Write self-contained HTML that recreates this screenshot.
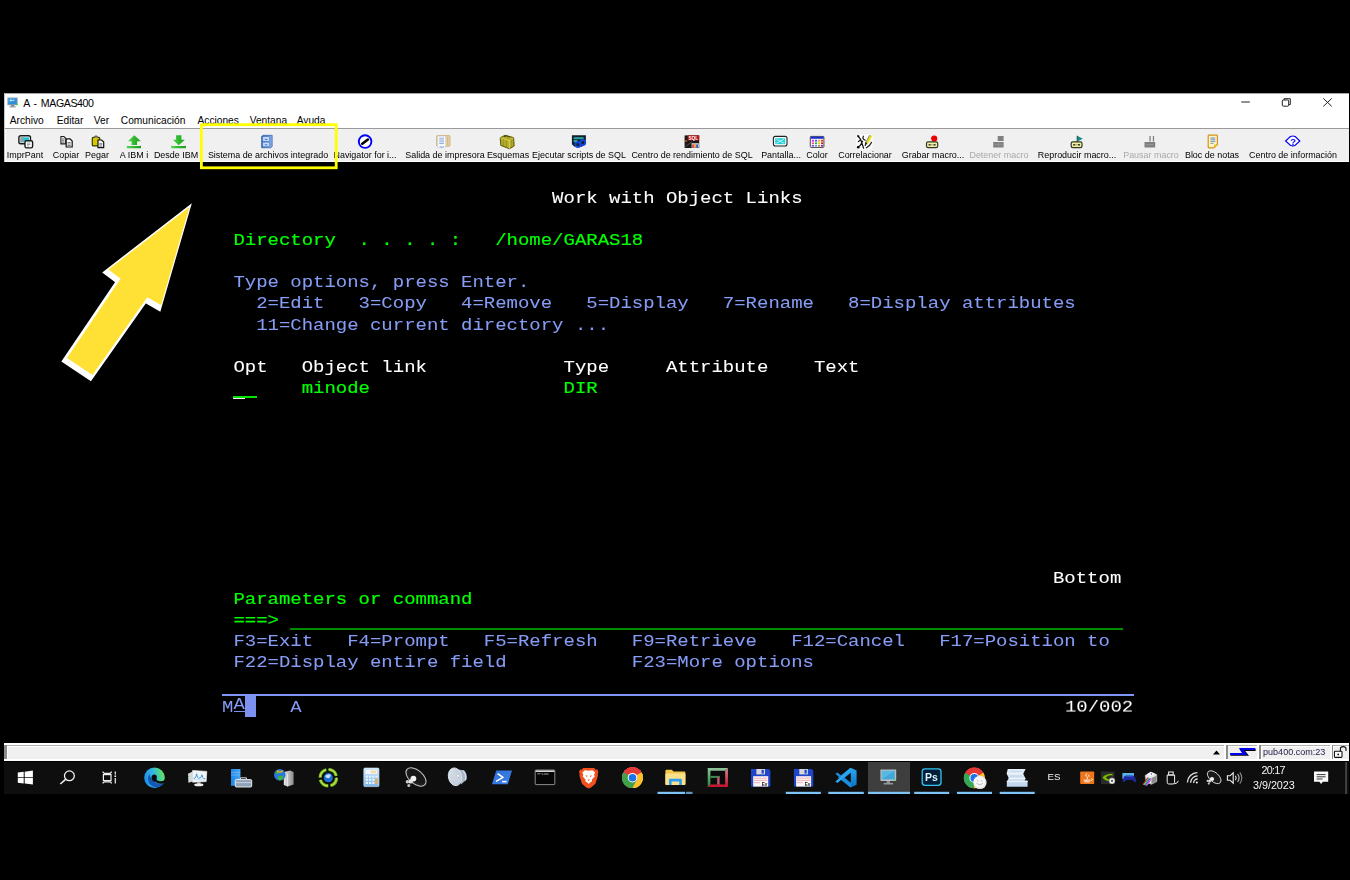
<!DOCTYPE html>
<html lang="es">
<head>
<meta charset="utf-8">
<title>A - MAGAS400</title>
<style>
html,body{margin:0;padding:0;background:#000;}
body{width:1350px;height:880px;position:relative;overflow:hidden;font-family:"Liberation Sans",sans-serif;}
.abs{position:absolute;}
/* window chrome */
#titlebar{position:absolute;left:4px;top:93px;width:1345px;height:69px;background:#fff;}
#tbline{position:absolute;left:4px;top:128px;width:1345px;height:1px;background:#9a9a9a;}
#toolbar{position:absolute;left:6px;top:129px;width:1343px;height:32px;background:#f0f0f0;}
.ui{position:absolute;white-space:nowrap;color:#000;line-height:12px;}
.title{font-size:10.6px;top:96.6px;letter-spacing:-0.4px;word-spacing:1.6px;}
.menu{font-size:10.2px;top:114.7px;}
.tl{font-size:8.95px;top:148.7px;transform:translateX(-50%);color:#000;will-change:transform;}
.tl.dis{color:#a9a9a9;}
.ico{position:absolute;}
/* terminal */
#term{will-change:transform;position:absolute;left:221.5px;top:188.45px;width:912px;height:504px;}
.row{position:absolute;left:0;height:21px;line-height:21px;white-space:pre;font-family:"Liberation Mono",monospace;font-size:18.98px;transform:scaleY(0.9);transform-origin:0 50%;}
.g{color:#00ff00;-webkit-text-stroke:0.25px #00ff00;}
.b{color:#869cf5;-webkit-text-stroke:0.08px #869cf5;}
.w{color:#ffffff;-webkit-text-stroke:0.08px #ffffff;}
.st{-webkit-text-stroke:0 !important;}
</style>
</head>
<body>
<!-- TITLEBAR -->
<div id="titlebar"></div>
<div id="tbline"></div>
<div id="toolbar"></div>
<div class="abs" style="left:4px;top:93px;width:1345px;height:1px;background:#a6a6a6"></div>
<div class="abs" style="left:4px;top:93px;width:1px;height:69px;background:#c4c4c4"></div>
<div class="ui title" style="left:23.3px">A - MAGAS400</div>
<div class="ui menu" style="left:9.7px">Archivo</div>
<div class="ui menu" style="left:56.7px">Editar</div>
<div class="ui menu" style="left:93.8px">Ver</div>
<div class="ui menu" style="left:120.8px">Comunicación</div>
<div class="ui menu" style="left:197.5px">Acciones</div>
<div class="ui menu" style="left:249.7px">Ventana</div>
<div class="ui menu" style="left:296.7px">Ayuda</div>
<div class="ui tl" style="left:25.4px">ImprPant</div>
<div class="ui tl" style="left:65.5px">Copiar</div>
<div class="ui tl" style="left:97.2px">Pegar</div>
<div class="ui tl" style="left:133.8px">A IBM i</div>
<div class="ui tl" style="left:176.2px">Desde IBM</div>
<div class="ui tl" style="left:268.2px">Sistema de archivos integrado</div>
<div class="ui tl" style="left:365.2px">Navigator for i...</div>
<div class="ui tl" style="left:444.9px">Salida de impresora</div>
<div class="ui tl" style="left:507.8px">Esquemas</div>
<div class="ui tl" style="left:579.4px">Ejecutar scripts de SQL</div>
<div class="ui tl" style="left:692.4px">Centro de rendimiento de SQL</div>
<div class="ui tl" style="left:781.2px">Pantalla...</div>
<div class="ui tl" style="left:816.5px">Color</div>
<div class="ui tl" style="left:864.6px">Correlacionar</div>
<div class="ui tl" style="left:932.5px">Grabar macro...</div>
<div class="ui tl dis" style="left:999.0px">Detener macro</div>
<div class="ui tl" style="left:1076.7px">Reproducir macro...</div>
<div class="ui tl dis" style="left:1150.5px">Pausar macro</div>
<div class="ui tl" style="left:1212.0px">Bloc de notas</div>
<div class="ui tl" style="left:1293.2px">Centro de información</div>

<svg class="abs" style="left:0;top:0" width="1350" height="880" viewBox="0 0 1350 880">
<defs>
<linearGradient id="gGreen" x1="0" y1="0" x2="1" y2="0"><stop offset="0" stop-color="#55d455"/><stop offset="0.5" stop-color="#2eb82e"/><stop offset="1" stop-color="#1e9a1e"/></linearGradient>
<linearGradient id="gCab" x1="0" y1="0" x2="1" y2="0"><stop offset="0" stop-color="#2d62b8"/><stop offset="1" stop-color="#8ab0ea"/></linearGradient>
</defs>
<!-- app icon in title -->
<g>
<rect x="7.300" y="97.400" width="10.400" height="7.800" rx="0.600" fill="#9aa4ac"/>
<rect x="8.200" y="98.200" width="8.600" height="6.100" fill="#2f8fd8"/>
<path d="M8.200 98.200 h8.600 l-8.600 4.600z" fill="#5ab0ea" opacity="0.600"/>
<path d="M10 100.400 h4.600 M10 100.400 l1.300 -1.100 M10 100.400 l1.300 1.100" stroke="#d8eefc" stroke-width="0.800" fill="none"/>
<circle cx="16.700" cy="104.300" r="0.900" fill="#2fd03a"/>
<path d="M11.200 105.200 h2.800 l0.600 1.300 h-4z" fill="#5a6068"/>
<rect x="9.300" y="106.500" width="6.600" height="0.900" fill="#8a9098"/>
</g>
<!-- window controls -->
<g stroke="#222" stroke-width="1" fill="none">
<line x1="1241.3" y1="102" x2="1249.8" y2="102"/>
<rect x="1282.3" y="100" width="6.4" height="6.2" rx="1"/>
<path d="M1284 100 V98.7 H1290.3 V104.6 H1288.8"/>
<path d="M1323.3 98.4 L1331.8 106.4 M1331.8 98.4 L1323.3 106.4"/>
</g>
<!-- ImprPant -->
<g>
<rect x="18.9" y="135.8" width="11.6" height="8" rx="1.8" fill="#fff" stroke="#1a1a1a" stroke-width="1.4"/>
<rect x="20.4" y="137.3" width="8.6" height="5" fill="#18c8d8"/>
<rect x="20.4" y="137.3" width="3" height="5" fill="#a89c9c"/>
<rect x="25" y="140.7" width="7.6" height="7.2" rx="1.6" fill="#fff" stroke="#1a1a1a" stroke-width="1.4"/>
<path d="M27 143 h3.4 M27 144.6 h3.4 M27 146 h2" stroke="#777" stroke-width="0.7"/>
</g>
<!-- Copiar -->
<g>
<path d="M60.9 136.5 h3 l1.8 1.8 v5.6 h-4.8z" fill="#e8e8e8" stroke="#222" stroke-width="1.1"/>
<path d="M62 139 h2.4 M62 140.6 h2.4 M62 142.2 h2.4" stroke="#555" stroke-width="0.7"/>
<path d="M66.2 138.8 h3.8 l2.2 2.2 v6 h-6z" fill="#fff" stroke="#111" stroke-width="1.2"/>
<path d="M67.5 142.5 h3.2 M67.5 144 h3.2 M67.5 145.5 h3.2" stroke="#444" stroke-width="0.7"/>
</g>
<!-- Pegar -->
<g>
<rect x="92.3" y="137.3" width="7.4" height="8.6" rx="1" fill="#d8c800" stroke="#3a3a00" stroke-width="1.2"/>
<path d="M94 137.5 q2 -3.2 4 0" fill="#ddd" stroke="#333" stroke-width="1"/>
<path d="M98 140 h3.6 l2.1 2.1 v5.5 h-5.7z" fill="#fff" stroke="#111" stroke-width="1.2"/>
<path d="M99.3 143.4 h3 M99.3 144.8 h3 M99.3 146.2 h3" stroke="#555" stroke-width="0.7"/>
</g>
<!-- A IBM i (upload) -->
<g fill="url(#gGreen)">
<path d="M134.3 135.2 L140.8 141.2 H137.1 V145.1 H131.6 V141.2 H127.9z"/>
<path d="M126.8 145 q0 1 1 1 h12.2 q1 0 1 -1 v3.3 h-14.2z"/>
</g>
<!-- Desde IBM (download) -->
<g fill="url(#gGreen)">
<path d="M176 135.3 H181.4 V139.8 H184.8 L178.7 145.2 L172.8 139.8 H176z"/>
<path d="M171.2 145 q0 1 1 1 h12.7 q1 0 1 -1 v3.3 h-14.7z"/>
</g>
<!-- Sistema de archivos integrado (file cabinet) -->
<g>
<path d="M261.6 136.3 l1.6 -1 h9 v11.3 l-1.6 1.2 h-9z" fill="url(#gCab)" stroke="#1f4f9f" stroke-width="0.6"/>
<rect x="262.8" y="136.8" width="6.6" height="4.4" fill="#c9dcf7" stroke="#4a78c8" stroke-width="0.5"/>
<rect x="262.8" y="142.2" width="6.6" height="4.4" fill="#c9dcf7" stroke="#4a78c8" stroke-width="0.5"/>
<path d="M264.8 139.4 h2.6 M264.8 144.8 h2.6" stroke="#3565b5" stroke-width="0.9"/>
</g>
<!-- Navigator for i -->
<g>
<circle cx="365.1" cy="141.6" r="6.3" fill="#fff" stroke="#0000ff" stroke-width="1.9"/>
<path d="M362.3 143.7 L367.9 139.5" stroke="#000" stroke-width="2.6" stroke-linecap="round"/>
</g>
<!-- Salida de impresora -->
<g>
<rect x="436.6" y="135.6" width="13.4" height="10.6" rx="0.8" fill="#e9d9b5" stroke="#c9a868" stroke-width="0.8"/>
<path d="M437.8 136.2 h7.6 v10.6 l-2 0.8 h-5.6z" fill="#fff" stroke="#b9c9e0" stroke-width="0.5"/>
<path d="M439.2 138.2 h4.8 M439.2 140 h4.8 M439.2 141.8 h4.8 M439.2 143.6 h4.8" stroke="#7d9fd8" stroke-width="0.9"/>
<path d="M439.6 146.4 l2.6 1 l1.6 -1" stroke="#5a8ad8" stroke-width="0.8" fill="none"/>
<rect x="446.6" y="136.4" width="2" height="9" fill="#d9be88"/>
</g>
<!-- Esquemas -->
<g>
<path d="M500.2 137.8 L505 135.2 L513.6 137.6 L514.2 146 L509.4 148.8 L500.8 145.4z" fill="#b4ac2c" stroke="#4e4a00" stroke-width="0.9"/>
<path d="M500.2 137.8 L509.2 140.6 L513.6 137.6 M509.2 140.6 L509.4 148.8" stroke="#e0dc58" stroke-width="0.8" fill="none"/>
<path d="M503.2 138.9 L503.6 146.3 M506.2 139.8 L506.5 147.5 M511.6 139.2 L511.9 147.2" stroke="#8a8410" stroke-width="0.6"/>
<path d="M504 136.6 q3 -1.6 5.4 0.6" stroke="#444000" stroke-width="0.9" fill="none"/>
</g>
<!-- Ejecutar scripts de SQL -->
<g>
<path d="M571.9 135.3 h14 v8.5 l-4 3 h-7.4 l-2.6 -2.6z" fill="#10202c"/>
<rect x="573.6" y="137.2" width="10" height="2" fill="#2aa0a0"/>
<rect x="573.6" y="140" width="4" height="2.4" fill="#2aa0a0"/>
<circle cx="578" cy="144.6" r="2.5" fill="none" stroke="#1048e8" stroke-width="1.7"/>
<circle cx="582.8" cy="142.6" r="2.5" fill="none" stroke="#1048e8" stroke-width="1.7"/>
</g>
<!-- Centro de rendimiento de SQL -->
<g>
<rect x="684.6" y="135.4" width="14.6" height="12.6" fill="#181818"/>
<rect x="687.6" y="135.4" width="11.6" height="5" fill="#b81818"/>
<text x="688.4" y="139.7" font-family="Liberation Sans, sans-serif" font-weight="bold" font-size="5.2" fill="#fff" textLength="9.8" lengthAdjust="spacingAndGlyphs">SQL</text>
<path d="M685.4 146.6 L692 141.8" stroke="#666" stroke-width="0.8"/>
<rect x="691.6" y="143.2" width="7.2" height="4.4" fill="#ddd"/>
<rect x="692.2" y="144.4" width="1.6" height="3.2" fill="#e03030"/>
<rect x="694.2" y="143.8" width="1.6" height="3.8" fill="#e8a020"/>
<rect x="696.2" y="144.4" width="1.8" height="3.2" fill="#3050e0"/>
<rect x="685" y="140.4" width="2.2" height="1.2" fill="#e87010"/>
</g>
<!-- Pantalla -->
<g>
<rect x="773.4" y="136.4" width="13.6" height="9.6" rx="2" fill="#fff" stroke="#222" stroke-width="1.1"/>
<rect x="775.2" y="138.2" width="10" height="6" fill="#28d0d8"/>
<path d="M776.4 139.2 L784 143.2 M784 139.2 L776.4 143.2" stroke="#c8f6f8" stroke-width="0.9"/>
</g>
<!-- Color -->
<g>
<rect x="810.3" y="136.4" width="13.6" height="11" rx="0.8" fill="#fff" stroke="#333" stroke-width="0.9"/>
<rect x="810.6" y="136.6" width="13" height="2.2" fill="#2030d0"/>
<g>
<rect x="811.8" y="139.8" width="2.2" height="1.8" fill="#e020e0"/><rect x="814.9" y="139.8" width="2.2" height="1.8" fill="#3060f0"/><rect x="818" y="139.8" width="2.2" height="1.8" fill="#f0a020"/><rect x="821" y="139.8" width="2" height="1.8" fill="#e03030"/>
<rect x="811.8" y="142.4" width="2.2" height="1.8" fill="#f050a0"/><rect x="814.9" y="142.4" width="2.2" height="1.8" fill="#20b040"/><rect x="818" y="142.4" width="2.2" height="1.8" fill="#e0d020"/><rect x="821" y="142.4" width="2" height="1.8" fill="#d02020"/>
<rect x="811.8" y="145" width="2.2" height="1.6" fill="#a040e0"/><rect x="814.9" y="145" width="2.2" height="1.6" fill="#40a0f0"/><rect x="818" y="145" width="2.2" height="1.6" fill="#f07030"/><rect x="821" y="145" width="2" height="1.6" fill="#7030c0"/>
</g>
</g>
<!-- Correlacionar -->
<g>
<rect x="856.200" y="134.200" width="16.400" height="15.400" rx="3" fill="#fff" opacity="0.700"/>
<path d="M857.800 135.800 L860.600 139.400 L863.600 148.200 M857.600 147.200 L860.200 145.600 L862.600 141.200 M858.400 141.600 L860.600 139.800 M863.400 136.200 Q861.800 138.800 865.200 140.200" stroke="#111" stroke-width="1.200" fill="none" stroke-linecap="round"/>
<circle cx="858.200" cy="147.200" r="1.300" fill="#000"/><circle cx="858.400" cy="136.200" r="1" fill="#000"/>
<path d="M871.100 135.400 L866.800 143.400" stroke="#e8e000" stroke-width="2.400"/>
<path d="M869.600 135.200 L865.600 142.800" stroke="#55559a" stroke-width="0.700"/>
<path d="M866.800 143.200 L865.200 145.800 L865.600 142.600z" fill="#111" stroke="#111" stroke-width="0.800"/>
<path d="M866.400 147.800 Q869.800 146 871.400 142.400" stroke="#222" stroke-width="1.300" fill="none" stroke-linecap="round"/>
</g>
<!-- Grabar macro -->
<g>
<circle cx="934.2" cy="138.6" r="3.1" fill="#f00000"/>
<rect x="926.5" y="141.9" width="11.2" height="5.7" rx="1.6" fill="#f0f0a0" stroke="#303828" stroke-width="1.2"/>
<rect x="928.6" y="144" width="2" height="1.6" fill="#404030"/><rect x="933.6" y="144" width="2" height="1.6" fill="#404030"/>
<path d="M930.6 144.8 h3" stroke="#808060" stroke-width="0.7"/>
</g>
<!-- Detener macro (disabled) -->
<g fill="#808080">
<rect x="997.7" y="136" width="5.9" height="5"/>
<rect x="993.2" y="142" width="10.4" height="5.5"/>
<path d="M993.2 144.4 h10.4 M998.4 142 v5.5" stroke="#9a9a9a" stroke-width="0.6"/>
</g>
<!-- Reproducir macro -->
<g>
<path d="M1077.2 135.8 L1082.8 138.8 L1077.2 141.6z" fill="#188888"/>
<path d="M1077.2 135.8 V142" stroke="#104848" stroke-width="0.9"/>
<rect x="1071.2" y="141.9" width="10.8" height="5.7" rx="1.6" fill="#f0f0a0" stroke="#303828" stroke-width="1.2"/>
<rect x="1073.2" y="144" width="2" height="1.6" fill="#404030"/><rect x="1078" y="144" width="2" height="1.6" fill="#404030"/>
<path d="M1075.2 144.8 h2.8" stroke="#808060" stroke-width="0.7"/>
</g>
<!-- Pausar macro (disabled) -->
<g fill="#808080">
<rect x="1149.4" y="136" width="1.3" height="5.4"/><rect x="1152.8" y="136" width="1.3" height="5.4"/>
<rect x="1144.5" y="142" width="10.7" height="5.5"/>
<path d="M1146.4 144.6 h6.8" stroke="#a0a0a0" stroke-width="0.8"/>
</g>
<!-- Bloc de notas -->
<g>
<path d="M1208.2 136 q0 -0.8 0.8 -0.8 h7.6 q0.8 0 0.8 0.8 v8.4 l-3.4 3.4 h-5 q-0.8 0 -0.8 -0.8z" fill="#fdf6c0" stroke="#d89018" stroke-width="1.2"/>
<path d="M1217.4 144.4 l-3.4 3.4 v-3.4z" fill="#f0c020"/>
<path d="M1210.4 138 h5 M1210.4 139.8 h5 M1210.4 141.6 h5 M1210.4 143.4 h3" stroke="#6080c8" stroke-width="0.8"/>
<rect x="1211.6" y="137.4" width="2.8" height="3" fill="#88a8e8" opacity="0.6"/>
</g>
<!-- Centro de informacion -->
<g>
<path d="M1285.6 141 L1290.4 136.6 Q1292.8 135.4 1295.2 136.6 L1299.8 141 L1295.2 145.2 Q1292.8 146.6 1290.4 145.2z" fill="#fff" stroke="#0808f0" stroke-width="1.2"/>
<text x="1290.3" y="144.6" font-family="Liberation Sans, sans-serif" font-weight="bold" font-size="9.5" fill="#0808f0">?</text>
</g>
</svg>

<!-- TERMINAL -->
<div id="term">
<div class="row w" style="top:0.00px">                             Work with Object Links</div>
<div class="row g" style="top:42.17px"> Directory  . . . . :   /home/GARAS18</div>
<div class="row b" style="top:84.34px"> Type options, press Enter.</div>
<div class="row b" style="top:105.43px">   2=Edit   3=Copy   4=Remove   5=Display   7=Rename   8=Display attributes</div>
<div class="row b" style="top:126.51px">   11=Change current directory ...</div>
<div class="row w" style="top:168.68px"> Opt   Object link            Type     Attribute    Text</div>
<div class="row g" style="top:189.77px">       minode                 DIR</div>
<div class="row w" style="top:379.53px">                                                                         Bottom</div>
<div class="row g" style="top:400.62px"> Parameters or command</div>
<div class="row g" style="top:421.70px"> ===></div>
<div class="row b" style="top:442.79px"> F3=Exit   F4=Prompt   F5=Refresh   F9=Retrieve   F12=Cancel   F17=Position to</div>
<div class="row b" style="top:463.87px"> F22=Display entire field           F23=More options</div>
<div class="abs" style="left:11.4px;top:207.6px;width:24px;height:2px;background:#00e600"></div>
<div class="abs" style="left:11.4px;top:209.6px;width:11.3px;height:1px;background:#f4e4f4"></div>
<div class="abs" style="left:68.0px;top:439.6px;width:832.5px;height:2px;background:#008c00"></div>
<div class="abs" style="left:0.0px;top:505.6px;width:911.7px;height:2px;background:#8096f5"></div>
<div class="row b st" style="left:0.00px;top:509.2px">M</div>
<div class="row b st" style="left:11.40px;top:506.3px">A</div>
<div class="abs" style="left:11.5px;top:522.5px;width:11.2px;height:1px;background:#7d92f0"></div>
<div class="abs" style="left:22.7px;top:508.3px;width:11.6px;height:20.6px;background:#7d92f0"></div>
<div class="row b st" style="left:68.34px;top:509.2px">A</div>
<div class="row w st" style="left:842.90px;top:509.2px">10/002</div>
</div>
<!-- STATUSBAR -->
<div class="abs" style="left:4.4px;top:743px;width:1344.6px;height:18px;background:#fff"></div>
<div class="abs" style="left:4.4px;top:745px;width:1344.6px;height:1px;background:#b0b0b0"></div>
<div class="abs" style="left:4.4px;top:745px;width:2.4px;height:13.7px;background:#8c8c8c"></div>
<div class="abs" style="left:8px;top:747.2px;width:1215.9px;height:11.5px;background:#f0f0f0"></div>
<div class="abs" style="left:1223.9px;top:745px;width:2.2px;height:16px;background:#fff"></div>
<div class="abs" style="left:1226.1px;top:745px;width:1.5px;height:13.7px;background:#8c8c8c"></div>
<div class="abs" style="left:1228.3px;top:746.8px;width:28.5px;height:11.9px;background:#f0f0f0"></div>
<div class="abs" style="left:1256.8px;top:745px;width:2.6px;height:16px;background:#fff"></div>
<div class="abs" style="left:1259.4px;top:745px;width:1.5px;height:13.7px;background:#8c8c8c"></div>
<div class="abs" style="left:1261.5px;top:746.8px;width:68px;height:11.9px;background:#f0f0f0"></div>
<div class="abs" style="left:1329.5px;top:745px;width:2.2px;height:16px;background:#fff"></div>
<div class="abs" style="left:1331.7px;top:745px;width:1.5px;height:13.7px;background:#8c8c8c"></div>
<div class="abs" style="left:1333.8px;top:746.8px;width:15.2px;height:11.9px;background:#f0f0f0"></div>
<div class="ui" style="left:1263px;top:746.4px;font-size:9.05px;color:#1c1c48">pub400.com:23</div>
<!-- TASKBAR -->
<div class="abs" style="left:4.4px;top:762px;width:1344.6px;height:32px;background:#0e0e0e"></div>
<div class="abs" style="left:868px;top:762px;width:42px;height:32px;background:#3e3e3e"></div>
<div class="ui" style="left:1047.6px;top:770.9px;font-size:9.7px;color:#f4f4f4">ES</div>
<div class="ui" style="left:1261.6px;top:764.3px;font-size:10.8px;color:#f4f4f4;letter-spacing:-0.75px">20:17</div>
<div class="ui" style="left:1253px;top:779.4px;font-size:10.8px;color:#f4f4f4;letter-spacing:-0.03px">3/9/2023</div>

<svg class="abs" style="left:0;top:0" width="1350" height="880" viewBox="0 0 1350 880">
<defs>
<linearGradient id="gEdge" x1="0" y1="0.6" x2="1" y2="0.35"><stop offset="0" stop-color="#1a8ee6"/><stop offset="0.45" stop-color="#2fb4e8"/><stop offset="0.8" stop-color="#4fd68a"/><stop offset="1" stop-color="#6ee65a"/></linearGradient>
<linearGradient id="gGr" x1="0" y1="0" x2="0" y2="1"><stop offset="0" stop-color="#8fc49a"/><stop offset="1" stop-color="#1f8a3a"/></linearGradient>
<linearGradient id="gRd" x1="0" y1="0" x2="0" y2="1"><stop offset="0" stop-color="#e08a98"/><stop offset="1" stop-color="#c8102a"/></linearGradient>
<linearGradient id="gSrv" x1="0" y1="0" x2="1" y2="0"><stop offset="0" stop-color="#1c86e8"/><stop offset="1" stop-color="#49a6f5"/></linearGradient>
<linearGradient id="gTower" x1="0" y1="0" x2="1" y2="0"><stop offset="0" stop-color="#e8e8e8"/><stop offset="1" stop-color="#8a8a8a"/></linearGradient>
<linearGradient id="gCalc" x1="0" y1="0" x2="0" y2="1"><stop offset="0" stop-color="#cfe6fb"/><stop offset="1" stop-color="#7db6ea"/></linearGradient>
<linearGradient id="gPS" x1="0" y1="0" x2="1" y2="1"><stop offset="0" stop-color="#2f6fd6"/><stop offset="1" stop-color="#3b82e8"/></linearGradient>
<linearGradient id="gVS" x1="0" y1="0" x2="0" y2="1"><stop offset="0" stop-color="#2aa7f2"/><stop offset="1" stop-color="#0b72c4"/></linearGradient>
<linearGradient id="gStack" x1="0" y1="0" x2="0" y2="1"><stop offset="0" stop-color="#e4eff9"/><stop offset="1" stop-color="#bcd4ea"/></linearGradient>
<radialGradient id="gSpk" cx="0.35" cy="0.35" r="0.8"><stop offset="0" stop-color="#e8eef4"/><stop offset="1" stop-color="#b4c0ce"/></radialGradient>
</defs>
<!-- start -->
<g fill="#fff">
<path d="M17.8 772.6 L23.7 771.8 V777.2 H17.8z"/><path d="M24.7 771.7 L32.9 770.6 V777.2 H24.7z"/>
<path d="M17.8 778.1 H23.7 V783.5 L17.8 782.7z"/><path d="M24.7 778.1 H32.9 V784.6 L24.7 783.6z"/>
</g>
<!-- search -->
<g stroke="#f2f2f2" fill="none" stroke-width="1.3">
<circle cx="69.4" cy="775.8" r="4.9"/><path d="M65.6 779.4 L60.3 784" stroke-width="1.5"/>
</g>
<!-- task view -->
<g stroke="#f0f0f0" fill="none" stroke-width="1.2">
<rect x="103.4" y="774.6" width="7.6" height="6"/>
<path d="M102.6 771.6 L104.2 773.4 H110.2 L111.8 771.6 M102.6 783.4 L104.2 781.8 H110.2 L111.8 783.4"/>
<path d="M115.3 771.4 V774.4 M115.3 778 V783.4"/>
<circle cx="115.3" cy="776.2" r="0.9" fill="#f0f0f0" stroke="none"/>
</g>
<!-- edge -->
<g>
<circle cx="154.500" cy="777.700" r="10.300" fill="url(#gEdge)"/>
<path d="M149.400 774.200 C146.600 778 148.200 784.600 153.600 786.800 C157.600 788.400 162.200 786.400 164.400 782.600 C160.600 785 155.600 783.600 153.400 780.600 C151.400 778.800 150.200 776.400 149.400 774.200z" fill="#1458b4"/>
<path d="M151.600 777.700 C151.400 775.400 153.200 774.400 154.600 774.600 C156.400 774.800 157.400 776.400 156.600 778.400 C155.800 780 158.800 781.600 161.400 781.200 C163 781 164.400 780.200 165 779.400 L165.200 782 C163.600 784 158.800 784.600 155.400 781.800 C153 781.600 151.800 779.600 151.600 777.700z" fill="#0a0a0a"/>
</g>
<!-- perfmon -->
<g>
<path d="M188 773.800 L192.600 771.400 V781.400 L188.400 782.800z" fill="#d4d8dc"/>
<rect x="188.100" y="775.800" width="1.100" height="1.100" fill="#4ad03a"/>
<path d="M192.600 770.400 L206.800 771.400 L206.200 781.600 L192.600 782.200z" fill="#f2f5f8" stroke="#ffffff" stroke-width="0.600"/>
<path d="M193.600 778.400 l1.400 -0.400 l0.800 -0.800 l0.800 -3.400 l0.900 3.600 l1 0.800 l1.600 -0.200 l1 -0.800 l0.800 -2.400 l0.900 2.600 l0.900 1 l1.400 0.200" stroke="#2e8fdc" stroke-width="0.900" fill="none"/>
<path d="M193.800 779.800 h11.600" stroke="#a8d0f0" stroke-width="0.600"/>
<path d="M197.400 782.200 h3 l0.400 1.600 h-3.800z" fill="#c4c8cc"/>
<ellipse cx="198.800" cy="784.700" rx="4.600" ry="1.500" fill="#eceff2"/>
</g>
<!-- server + toolbox -->
<g>
<rect x="231" y="769" width="9.4" height="16.8" fill="url(#gSrv)"/>
<path d="M231 772.4 h9.4 M231 775 h9.4" stroke="#8cc6fa" stroke-width="0.6"/>
<rect x="235.3" y="779.6" width="16.4" height="7.4" rx="1" fill="#8fa3b8" stroke="#f2f6fa" stroke-width="0.9"/>
<path d="M240.4 779.4 v-1.6 h6 v1.6" stroke="#f2f6fa" stroke-width="0.9" fill="none"/>
<path d="M235.6 782.6 h15.8" stroke="#dfe7ef" stroke-width="0.7"/>
</g>
<!-- iis -->
<g>
<path d="M283.8 772 l6.4 -1.4 l3.4 1.4 v12.6 l-6 2 l-3.8 -1.6z" fill="url(#gTower)"/>
<path d="M287.6 773.6 v13" stroke="#fafafa" stroke-width="0.6"/>
<circle cx="279.8" cy="774.8" r="5.8" fill="#2a78d8"/>
<path d="M275.2 772.4 q2.4 -2.6 5 -1 q-0.4 2.2 -3 2.6z M278 776.4 q3 -1.4 5.6 0.6 q-1 3.2 -4.2 3.4 q-2 -1.6 -1.4 -4z" fill="#3fb43a"/>
<path d="M276.6 769.8 l3 1.6 l3.6 -1.4 l-1 2.4 l-4.6 0.2z" fill="#f2b01e"/>
</g>
<!-- sync globe -->
<g>
<circle cx="328.3" cy="777.7" r="8.2" fill="none" stroke="#7fc41c" stroke-width="3.2" stroke-dasharray="10.5 2.4"/>
<circle cx="328.3" cy="777.7" r="8.2" fill="none" stroke="#d9f07a" stroke-width="1" stroke-dasharray="10.5 2.4" opacity="0.8"/>
<circle cx="328.3" cy="777.7" r="4.6" fill="#1d6fd8"/>
<path d="M325 776 q2.6 -2.6 5.6 -1.4 q0.6 2.4 -2 3.6 q-2.4 0.2 -3.6 -2.2z" fill="#eaf6ff" opacity="0.85"/>
</g>
<!-- calculator -->
<g>
<rect x="363.8" y="768" width="15.2" height="18.6" rx="1.2" fill="url(#gCalc)" stroke="#dcecfb" stroke-width="0.6"/>
<rect x="365.6" y="769.8" width="11.6" height="4.2" fill="#f4f8fc"/>
<rect x="370.6" y="770.6" width="5.6" height="2.6" fill="#f6d9a6"/>
<g fill="#eaf3fc"><rect x="365.8" y="775.6" width="2.2" height="2"/><rect x="369" y="775.6" width="2.2" height="2"/><rect x="372.2" y="775.6" width="2.2" height="2"/><rect x="375.4" y="775.6" width="2.2" height="2"/>
<rect x="365.8" y="778.8" width="2.2" height="2"/><rect x="369" y="778.8" width="2.2" height="2"/><rect x="372.2" y="778.8" width="2.2" height="2"/>
<rect x="365.8" y="782" width="2.2" height="2"/><rect x="369" y="782" width="2.2" height="2"/><rect x="372.2" y="782" width="2.2" height="2"/></g>
<rect x="375.4" y="778.8" width="2.2" height="5.2" fill="#f0a848"/>
</g>
<!-- speaker dark -->
<g>
<ellipse cx="416" cy="777" rx="11.800" ry="6.800" transform="rotate(40 416 777)" fill="#1e1e1e" stroke="#c4c4c4" stroke-width="1"/>
<ellipse cx="416.600" cy="776.400" rx="9.600" ry="4.800" transform="rotate(38 416.600 776.400)" fill="#181818"/>
<circle cx="413.400" cy="778.600" r="2.900" fill="#f4f4f4"/>
<circle cx="410.600" cy="781.400" r="2.200" fill="#e4e4e4"/>
<circle cx="407.400" cy="781.800" r="1.700" fill="#d0d0d0"/>
<circle cx="408.800" cy="785.400" r="1.500" fill="#c4c4c4"/>
</g>
<!-- speaker light -->
<g>
<path d="M457 769.200 L464.400 770.600 Q467.600 774.600 466.600 779.600 L461 784.400z" fill="#a9b6c6"/>
<path d="M462.600 770.400 Q466.800 774.600 465.200 780.400" stroke="#d4dde8" stroke-width="1.200" fill="none"/>
<ellipse cx="455" cy="776.800" rx="6.600" ry="9" transform="rotate(-12 455 776.800)" fill="url(#gSpk)" stroke="#e6ecf2" stroke-width="0.800"/>
<ellipse cx="455.400" cy="776.800" rx="5.200" ry="7.400" transform="rotate(-12 455.400 776.800)" fill="#c6d2de" opacity="0.700"/>
<circle cx="458" cy="775.800" r="1.500" fill="#f4f6f8" stroke="#9aa6b4" stroke-width="0.400"/>
</g>
<!-- powershell -->
<g>
<path d="M496.2 770.6 H512 L507.8 784.2 H492z" fill="url(#gPS)"/>
<path d="M497.6 773.6 L503 777.4 L496 781.4" stroke="#fff" stroke-width="1.6" fill="none" stroke-linejoin="round"/>
<path d="M502 781.6 h4.6" stroke="#fff" stroke-width="1.5"/>
</g>
<!-- cmd -->
<g>
<rect x="535.2" y="770" width="19.6" height="14.6" rx="0.8" fill="#050505" stroke="#9a9a9a" stroke-width="0.9"/>
<rect x="535.6" y="770.4" width="18.8" height="1.6" fill="#d8d8d8"/>
<path d="M537.4 773.8 h3 M541.6 773.6 l1.4 1 M543.6 774 h5" stroke="#c8c8c8" stroke-width="0.8"/>
</g>
<!-- brave -->
<g>
<path d="M583.2 768 h11 l1.4 1.8 l1.8 -0.2 l1 2.6 l-0.8 1.8 l0.4 1.4 l-2.6 8.4 l-4.4 3.6 l-2.3 1 l-2.3 -1 l-4.4 -3.600 l-2.6 -8.4 l0.4 -1.4 l-0.8 -1.8 l1 -2.6 l1.800 0.2z" fill="#f4501e"/>
<path d="M588.700 770.800 l3.800 -0.600 l2.600 2.400 l-1 2 l0.600 2 l-2.800 3 l0.200 1.600 l-2.400 1.600 l-1 1.400 l-1 -1.400 l-2.400 -1.600 l0.200 -1.600 l-2.800 -3 l0.600 -2 l-1 -2 l2.600 -2.400z" fill="#fff"/>
<path d="M585.600 775.200 l2 0.600 l-0.800 1.400z M591.800 775.200 l-2 0.600 l0.800 1.400z M587.600 779.600 h2.200 l-1.100 1.600z" fill="#f4501e"/>
</g>
<!-- chrome -->
<g>
<circle cx="632.5" cy="777.7" r="10.4" fill="#e8e8e8"/>
<path d="M632.5 777.7 L623.49 772.5 A10.4 10.4 0 0 1 641.51 772.5z" fill="#e53935"/>
<path d="M632.5 777.7 L641.51 772.5 A10.4 10.4 0 0 1 632.5 788.1z" fill="#fbc02d"/>
<path d="M632.5 777.7 L632.5 788.1 A10.4 10.4 0 0 1 623.49 772.5z" fill="#43a047"/>
<path d="M623.49 772.5 A10.4 10.4 0 0 1 641.51 772.5 L636.6 775.3 H628.4z" fill="#e53935"/>
<path d="M641.51 772.5 A10.4 10.4 0 0 1 632.5 788.1 L636.6 780.1 L636.6 775.300z" fill="#fbc02d"/>
<path d="M632.5 788.1 A10.4 10.4 0 0 1 623.49 772.5 L628.400 775.3 L628.4 780.1 L636.600 780.100z" fill="#43a047"/>
<circle cx="632.5" cy="777.7" r="4.8" fill="#fff"/>
<circle cx="632.5" cy="777.7" r="3.8" fill="#1a73e8"/>
</g>
<!-- explorer -->
<g>
<path d="M665.4 771 q0 -1.200 1.200 -1.200 h5.200 l1.800 1.800 h10.600 q1.200 0 1.200 1.200 v11 q0 1.200 -1.200 1.200 h-17.600 q-1.200 0 -1.200 -1.200z" fill="#f6c94a"/>
<rect x="665.4" y="773.4" width="20" height="11.600" rx="1" fill="#fbe08a"/>
<path d="M669 785 v-5.200 q0 -1 1 -1 h10.800 q1 0 1 1 v5.200 h-2.600 v-3.400 h-7.600 v3.400z" fill="#2a9df4"/>
</g>
<!-- green/red square -->
<g>
<rect x="707.700" y="768.100" width="20.200" height="19" fill="#0a0a0a"/>
<path d="M707.700 768.100 h20.200 l-2.700 2.700 h-14.800 v13.600 l-2.700 2.700z" fill="url(#gGr)"/>
<path d="M727.900 768.100 v19 h-20.200 l2.700 -2.700 h14.800 v-13.600z" fill="url(#gRd)"/>
<rect x="710.400" y="775.900" width="9.200" height="2" fill="#3f8a52"/>
<path d="M719.600 775.900 v8.500 h-2.400 v-6.500z" fill="#c05a6a"/>
</g>
<!-- floppy 1 -->
<g id="flop">
<path d="M751 769 h17.600 l1.800 1.800 v15.800 h-19.400z" fill="#1f46c8"/>
<rect x="756.400" y="769" width="8.600" height="5.400" fill="#d8d8dc"/><rect x="761.600" y="769.800" width="2.200" height="3.800" fill="#1f46c8"/>
<rect x="753.200" y="776.200" width="15" height="10.400" fill="#fdf4f4"/>
<path d="M754 778.200 h13.400 M754 780.400 h13.400 M754 782.600 h6" stroke="#e89aa0" stroke-width="0.700"/>
<rect x="761.400" y="781.800" width="6.200" height="4.200" fill="#fff"/>
<text x="761.800" y="785.600" font-family="Liberation Sans, sans-serif" font-weight="bold" font-size="4.600" fill="#111">Ev</text>
</g>
<!-- floppy 2 -->
<g>
<path d="M793.900 769 h17.600 l1.800 1.800 v15.800 h-19.400z" fill="#1f46c8"/>
<rect x="799.300" y="769" width="8.600" height="5.400" fill="#d8d8dc"/><rect x="804.500" y="769.800" width="2.200" height="3.800" fill="#1f46c8"/>
<rect x="796.100" y="776.200" width="15" height="10.400" fill="#fdf4f4"/>
<path d="M796.900 778.200 h13.400 M796.900 780.400 h13.400 M796.900 782.600 h6" stroke="#e89aa0" stroke-width="0.700"/>
<rect x="804.300" y="781.800" width="6.200" height="4.200" fill="#fff"/>
<text x="804.700" y="785.600" font-family="Liberation Sans, sans-serif" font-weight="bold" font-size="4.600" fill="#111">Ev</text>
</g>
<!-- vscode -->
<g>
<path d="M850.600 767.800 L856.600 770.600 V784.800 L850.600 787.600 L838 777.700z M850.800 772.800 L844.600 777.700 L850.800 782.600z" fill="url(#gVS)" fill-rule="evenodd"/>
<path d="M835.400 773.800 L837.400 772.400 L851 784 L850.600 787.600z" fill="#1b8fde"/>
<path d="M835.400 781.600 L837.400 783 L851 771.400 L850.600 767.800z" fill="#2aa7f2"/>
</g>
<!-- active: terminal monitor -->
<g>
<rect x="880.400" y="769.400" width="15.800" height="11.600" rx="0.800" fill="#b8bec4"/>
<rect x="881.800" y="770.800" width="13" height="8.600" fill="#3fa8d8"/>
<path d="M881.800 770.800 h13 l-13 8.600z" fill="#62c0e8" opacity="0.700"/>
<circle cx="894.600" cy="780" r="0.800" fill="#3adf3a"/>
<rect x="886.600" y="781" width="3.400" height="2.200" fill="#8c9298"/>
<rect x="883.600" y="783.200" width="9.400" height="1.200" fill="#a8aeb4"/>
</g>
<!-- photoshop -->
<g>
<rect x="922.200" y="768.800" width="18.800" height="16.600" rx="2.800" fill="#001e36" stroke="#31c5f4" stroke-width="1.300"/>
<text x="925" y="781.200" font-family="Liberation Sans, sans-serif" font-weight="bold" font-size="10.500" fill="#dff4ff">Ps</text>
</g>
<!-- chrome w/ avatar -->
<g>
<circle cx="974.3" cy="777.9" r="10.4" fill="#e53935"/>
<path d="M974.3 777.9 L983.31 772.70 A10.4 10.4 0 0 1 974.30 788.30z" fill="#fbc02d"/>
<path d="M974.3 777.9 L974.30 788.30 A10.4 10.4 0 0 1 965.29 772.70z" fill="#34a853"/>
<path d="M965.29 772.70 L970.14 780.30 L970.14 780.30 L974.30 788.30 A10.4 10.4 0 0 1 965.29 772.70z" fill="#34a853"/>
<path d="M983.31 772.70 L978.46 775.50 L978.46 780.30 L974.30 782.70 L974.30 788.30 A10.4 10.4 0 0 0 983.31 772.70z" fill="#fbc02d"/>
<path d="M965.29 772.70 A10.4 10.4 0 0 1 983.31 772.70 L978.46 775.50 L974.30 773.10 L970.14 775.50z" fill="#e53935"/>
<circle cx="974.3" cy="777.9" r="4.900" fill="#fff"/>
<circle cx="974.3" cy="777.9" r="3.900" fill="#1a73e8"/>
<circle cx="979.900" cy="782.400" r="6.700" fill="#e6e6e6"/>
<circle cx="979.400" cy="781.800" r="5.600" fill="#f7f7f7"/>
<path d="M976.600 783.400 q3.200 3 6.400 0" stroke="#b0b0b0" stroke-width="0.800" fill="none"/>
<circle cx="977.600" cy="780.800" r="0.600" fill="#a8a8a8"/><circle cx="981.400" cy="780.800" r="0.600" fill="#a8a8a8"/>
</g>
<!-- stack icon -->
<g>
<path d="M1007.800 769 H1025.600 L1023.200 773.800 L1025.600 778.800 L1024.600 780.600 H1027.600 V786.800 H1006.800 V781.600 L1008.800 778.200 L1006.600 773.600z" fill="url(#gStack)"/>
<path d="M1007 773.800 H1023.200 M1008.600 778.400 H1025.400" stroke="#f4f9fd" stroke-width="0.900"/>
<path d="M1006.800 781.400 H1027.600" stroke="#f4f9fd" stroke-width="0.900"/>
<path d="M1010 771.400 h12 M1010 776 h12" stroke="#b9cfe4" stroke-width="0.700"/>
</g>
<!-- underlines -->
<g fill="#7ec3f7">
<rect x="657.500" y="791.800" width="27.600" height="2.200"/><rect x="686" y="791.800" width="6.500" height="2.200" fill="#5f94bd"/>
<rect x="785.800" y="791.800" width="35" height="2.200"/>
<rect x="828.300" y="791.800" width="35.500" height="2.200"/>
<rect x="868" y="791.800" width="42" height="2.200"/>
<rect x="914.200" y="791.800" width="35" height="2.200"/>
<rect x="957" y="791.800" width="35" height="2.200"/>
<rect x="999.700" y="791.800" width="35" height="2.200"/>
</g>
</svg>

<svg class="abs" style="left:0;top:0" width="1350" height="880" viewBox="0 0 1350 880">
<!-- status bar right: arrow, connection, lock -->
<path d="M1213 754.400 L1216.500 750.400 L1220 754.400z" fill="#000"/>
<g>
<path d="M1239.300 748.700 H1255.600 V751 H1245.200 L1249 755.800 H1230.500 V753.400 H1242.400z" fill="#000"/>
<path d="M1239 748 H1255.200 V750 H1243.800 L1247.300 754.900 H1230.100 V752.900 H1242.300z" fill="#0000f0"/>
</g>
<g fill="none" stroke="#111" stroke-width="1.100">
<rect x="1334.400" y="751.200" width="7.600" height="6.200" rx="0.800" fill="#fff"/>
<path d="M1340.400 751.200 V748.800 Q1340.400 746.600 1343.200 746.600 Q1346 746.600 1346 748.800 V751"/>
<circle cx="1338.200" cy="754.400" r="0.900" fill="#111" stroke="none"/>
</g>
<!-- tray: java -->
<g>
<rect x="1080.200" y="771.500" width="14" height="12.600" rx="0.800" fill="#f0761c"/>
<path d="M1086.800 773.400 q-2.200 1.800 0 3.200 q1.800 1.200 0 2.800 M1089.200 774.600 q-1.400 1.200 0 2.200" stroke="#fff" stroke-width="0.900" fill="none"/>
<path d="M1083.600 780.200 h7 M1084.400 781.800 h5.400 M1091.200 778.600 l1.400 1 l-1.400 1" stroke="#fff" stroke-width="0.900" fill="none"/>
</g>
<!-- nvidia -->
<g>
<rect x="1101" y="771.500" width="13.600" height="12.600" fill="#2b2b2b"/>
<path d="M1102.400 777.400 q4 -4.200 10.200 -3.600 v1.600 q-4.400 -0.400 -6.800 2.200 q2.400 2.600 5.200 1.800 v1.600 q-5 0.800 -8.600 -3.600z" fill="#76b900"/>
<circle cx="1112" cy="780.900" r="3.100" fill="#f2f2f2" stroke="#444" stroke-width="0.500"/>
<circle cx="1112" cy="780.900" r="1.100" fill="#555"/>
</g>
<!-- gamepad -->
<g>
<rect x="1122.400" y="773" width="11.600" height="6" fill="#58b4e6"/>
<path d="M1123.400 778 q1 -2.600 3.200 -2.400 h5.400 q2.400 -0.200 3.400 2.400 l0.800 3.200 q-0.600 1.400 -2 0.600 l-1.800 -1.800 h-6 l-1.800 1.800 q-1.400 0.800 -2 -0.600z" fill="#1c2c9c"/>
<path d="M1126 776.600 h7" stroke="#3b55d8" stroke-width="0.800"/>
</g>
<!-- colour printer -->
<g>
<path d="M1145 775.400 L1150.600 772 L1156.800 774.400 L1157 781.600 L1151.400 784.400 L1146 782z" fill="#e8e8e8" stroke="#9a9a9a" stroke-width="0.500"/>
<path d="M1146.600 774.400 L1150.800 772 L1155 773.600 L1151 776z" fill="#fafafa"/>
<circle cx="1151.400" cy="774" r="0.700" fill="#2a50e0"/>
<path d="M1151.400 778 L1156.600 775.800 V781.400 L1151.400 784z" fill="#8c8c8c"/>
<path d="M1143 784.800 L1148 777.600 L1152.400 779 L1147 785.400z" fill="#fff"/>
<path d="M1143 784.800 L1148 777.600" stroke="#e02020" stroke-width="1.100"/>
<path d="M1144.200 785 L1149.200 777.900" stroke="#20c040" stroke-width="1.100"/>
<path d="M1145.400 785.200 L1150.400 778.300" stroke="#2040e0" stroke-width="1.100"/>
<path d="M1146.600 785.400 L1151.600 778.700" stroke="#e020c0" stroke-width="1"/>
</g>
<!-- usb -->
<g stroke="#f0f0f0" stroke-width="1" fill="none">
<rect x="1168.600" y="772" width="4.600" height="3"/>
<path d="M1167.200 775 h7.400 v7.400 q0 1.600 -1.600 1.600 h-4.200 q-1.600 0 -1.600 -1.600z"/>
<path d="M1174.400 783.800 q2.600 0.200 4 -3"/>
</g>
<!-- wifi -->
<g stroke="#e4e4e4" stroke-width="1.300" fill="none">
<path d="M1187.400 782.400 A10 10 0 0 1 1197.400 772.600"/>
<path d="M1190.600 782.800 A7 7 0 0 1 1197.600 775.800"/>
<path d="M1193.600 783 A4 4 0 0 1 1197.600 779"/>
<circle cx="1196.800" cy="782.600" r="1" fill="#fff" stroke="none"/>
</g>
<!-- realtek speaker -->
<g>
<ellipse cx="1214.200" cy="777.200" rx="8.200" ry="4.600" transform="rotate(42 1214.200 777.200)" fill="#1a1a1a" stroke="#dcdcdc" stroke-width="0.900"/>
<circle cx="1212" cy="779" r="2.100" fill="#f4f4f4"/>
<circle cx="1209.600" cy="781" r="1.500" fill="#e0e0e0"/>
<circle cx="1207.600" cy="780.800" r="1.100" fill="#cfcfcf"/>
<circle cx="1208.800" cy="783.600" r="1.100" fill="#c4c4c4"/>
</g>
<!-- volume -->
<g stroke="#f0f0f0" stroke-width="1.100" fill="none">
<path d="M1227.400 775.800 h2.600 l3.200 -3 v10.400 l-3.200 -3 h-2.600z"/>
<path d="M1235.400 775.800 q1.600 2.200 0 4.400"/>
<path d="M1237.600 774 q3 4 0 8" stroke="#c8c8c8"/>
<path d="M1239.800 772.400 q4 5.600 0 11.200" stroke="#8a8a8a"/>
</g>
<!-- notification -->
<g>
<path d="M1314 771.600 h14.200 v10.200 h-5.400 l-1.700 2.200 l-1.700 -2.200 h-5.400z" fill="#fafafa"/>
<path d="M1316.600 774.600 h9 M1316.600 776.800 h9 M1316.600 779 h6" stroke="#202020" stroke-width="0.900"/>
</g>
<rect x="1345.300" y="762" width="1.600" height="32" fill="#4c4c4c"/>
</svg>

<!-- OVERLAY -->
<svg class="abs" style="left:0;top:0" width="1350" height="880" viewBox="0 0 1350 880">
<rect x="201.400" y="124.700" width="134.800" height="43.100" fill="none" stroke="#ffff00" stroke-width="2.800"/>
<polygon points="189.5,207.1 161,305.1 147.3,297.3 92.5,375 67,358 120.6,278.8 108.5,269.6" transform="translate(-2.2,2.8)" fill="#ffffff" stroke="#ffffff" stroke-width="5" stroke-linejoin="miter" stroke-miterlimit="8"/>
<polygon points="189.5,207.1 161,305.1 147.3,297.3 92.5,375 67,358 120.6,278.8 108.5,269.6" fill="#ffe135"/>
</svg>
</body>
</html>
